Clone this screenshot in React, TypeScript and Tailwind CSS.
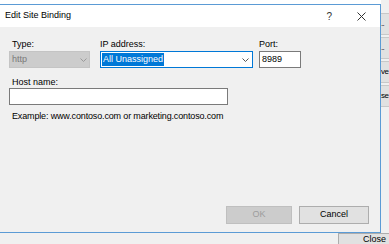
import React from "react"

const font = { fontFamily: '"Liberation Sans", Arial, sans-serif' }

function Chevron({ color }: { color: string }) {
  return (
    <svg width="7" height="4" viewBox="0 0 7 4" className="shrink-0">
      <path d="M0.5 0.5 L3.5 3.5 L6.5 0.5" fill="none" stroke={color} strokeWidth="1" />
    </svg>
  )
}

export default function App() {
  return (
    <div className="w-[389px] h-[244px] overflow-hidden flex flex-col bg-white text-[9px] text-black" style={font}>
      <div className="flex h-[233px]">
        {/* dialog */}
        <div className="w-[381px] flex flex-col pt-[4px] bg-white">
          <div className="flex-1 flex flex-col border-t border-r border-b border-[#5b9bd5]">
            <div className="h-[22px] bg-white flex items-center pl-[5px] pr-[14px]">
              <span className="text-[9px]">Edit Site Binding</span>
              <span className="ml-auto text-[10px] text-[#333] mr-[25px]">?</span>
              <svg width="9" height="9" viewBox="0 0 9 9">
                <path d="M0.5 0.5 L8.5 8.5 M8.5 0.5 L0.5 8.5" stroke="#333" strokeWidth="1" />
              </svg>
            </div>
            <div className="flex-1 bg-[#f0f0f0] flex flex-col pl-[9px] pt-[11px] pb-[8px]">
              <div className="flex">
                <div className="w-[81px] flex flex-col">
                  <span className="h-[12px] leading-[12px] pl-[3px] text-[#000]">Type:</span>
                  <div className="mt-[1px] h-[17px] bg-[#cccccc] border border-[#c4c4c4] flex items-center pl-[2px] pr-[2px]">
                    <span className="text-[#7a7a7a]">http</span>
                    <span className="ml-auto"><Chevron color="#9a9a9a" /></span>
                  </div>
                </div>
                <div className="w-[153px] ml-[10px] flex flex-col">
                  <span className="h-[12px] leading-[12px]">IP address:</span>
                  <div className="mt-[1px] h-[17px] bg-white border border-[#0078d7] flex items-center pl-[1px] pr-[3px]">
                    <span className="bg-[#0078d7] text-white h-[13px] leading-[13px] px-[1px]">All Unassigned</span>
                    <span className="ml-auto"><Chevron color="#555" /></span>
                  </div>
                </div>
                <div className="w-[42px] ml-[6px] flex flex-col">
                  <span className="h-[12px] leading-[12px]">Port:</span>
                  <div className="mt-[1px] h-[17px] bg-white border border-[#7a7a7a] flex items-center pl-[2px]">
                    <span>8989</span>
                  </div>
                </div>
              </div>
              <span className="mt-[8px] h-[12px] leading-[12px] pl-[3px]">Host name:</span>
              <div className="w-[219px] h-[17px] bg-white border border-[#7a7a7a]" />
              <span className="mt-[5px] h-[12px] leading-[12px] pl-[3px] tracking-[-0.15px]">Example: www.contoso.com or marketing.contoso.com</span>
              <div className="mt-auto flex justify-end pr-[11px] gap-[7px]">
                <div className="w-[66px] h-[18px] bg-[#cccccc] border border-[#bfbfbf] flex items-center justify-center text-[#9d9d9d]">OK</div>
                <div className="w-[70px] h-[18px] bg-[#e1e1e1] border border-[#adadad] flex items-center justify-center">Cancel</div>
              </div>
            </div>
          </div>
        </div>
        {/* strip of the window behind */}
        <div className="flex-1 flex flex-col pt-[13px] gap-[2px] bg-[#f0f0f0] overflow-hidden">
          {["..", "..", "ve", "se"].map((t, i) => (
            <div key={i} className="h-[22px] bg-[#e1e1e1] border-y border-[#c8c8c8] flex items-center text-[8px] tracking-[-0.6px] whitespace-nowrap">
              {t}
            </div>
          ))}
        </div>
      </div>
      <div className="flex-1 bg-[#f0f0f0] flex justify-end">
        <div className="w-[51px] bg-[#e1e1e1] border-l border-t border-[#adadad] flex items-start pl-[24px] leading-[10px] whitespace-nowrap overflow-hidden">
          Close
        </div>
      </div>
    </div>
  )
}
